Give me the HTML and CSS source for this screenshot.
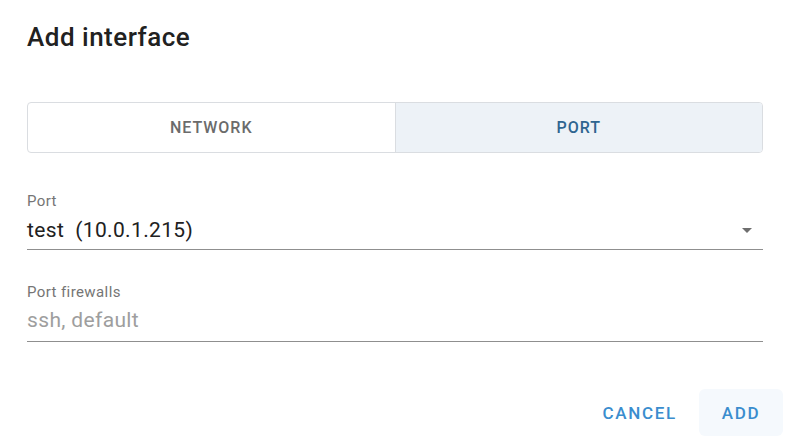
FILE: index.html
```html
<!DOCTYPE html>
<html>
<head>
<meta charset="utf-8">
<link rel="stylesheet" href="styles.css">
</head>
<body>
<div class="dialog">
  <h1 class="title">Add interface</h1>
  <div class="toggle">
    <div class="seg">NETWORK</div>
    <div class="seg seg-active">PORT</div>
  </div>
  <div class="field field-first">
    <div class="label">Port</div>
    <div class="control">
      <span class="value">test&nbsp; (10.0.1.215)</span>
      <span class="arrow"></span>
    </div>
  </div>
  <div class="field field-second">
    <div class="label">Port firewalls</div>
    <div class="control control-tall">
      <span class="placeholder">ssh, default</span>
    </div>
  </div>
</div>
<div class="actions">
  <button class="btn">CANCEL</button>
  <button class="btn btn-primary">ADD</button>
</div>
</body>
</html>
```
FILE: styles.css
```css
html, body {
  margin: 0;
  padding: 0;
  background: #ffffff;
}
body {
  font-family: Roboto, "Liberation Sans", sans-serif;
  width: 788px;
  height: 446px;
  overflow: hidden;
}
.dialog {
  padding: 21px 25px 0 27px;
}
.title {
  margin: 0;
  font-size: 26px;
  line-height: 33px;
  font-weight: 500;
  letter-spacing: 0.5px;
  color: #212121;
}
.toggle {
  margin-top: 48px;
  display: flex;
  height: 49px;
  border: 1px solid #dadde1;
  border-radius: 4px;
  overflow: hidden;
}
.seg {
  flex: 1;
  display: flex;
  align-items: center;
  justify-content: center;
  font-size: 16px;
  font-weight: 500;
  letter-spacing: 0.06em;
  color: #6b6b6b;
}
.seg-active {
  background: #edf2f7;
  color: #2e6590;
  border-left: 1px solid #dadde1;
}
.field-first {
  margin-top: 40px;
}
.field-second {
  margin-top: 34px;
}
.label {
  font-size: 15px;
  line-height: 17px;
  letter-spacing: 0.4px;
  color: #757575;
}
.control {
  display: flex;
  align-items: center;
  justify-content: space-between;
  margin-top: 8px;
  height: 24px;
  padding-bottom: 7px;
  border-bottom: 1px solid #8f8f8f;
}
.control-tall {
  margin-top: 7px;
  padding-bottom: 9px;
}
.value {
  font-size: 21px;
  line-height: 24px;
  letter-spacing: 0.35px;
  color: #212121;
}
.placeholder {
  font-size: 21px;
  line-height: 24px;
  letter-spacing: 0.35px;
  color: #9e9e9e;
}
.arrow {
  width: 0;
  height: 0;
  margin-right: 11px;
  border-left: 5.5px solid transparent;
  border-right: 5.5px solid transparent;
  border-top: 5.5px solid #6e6e6e;
}
.actions {
  display: flex;
  justify-content: flex-end;
  gap: 6px;
  margin-top: 47px;
  padding-right: 5px;
}
.btn {
  height: 47px;
  padding: 0 16px;
  border: none;
  border-radius: 6px;
  background: transparent;
  font-family: Roboto, "Liberation Sans", sans-serif;
  font-size: 17px;
  font-weight: 500;
  letter-spacing: 0.1em;
  color: #3a8dce;
}
.btn-primary {
  width: 84px;
  background: #f5f9fd;
}
```
